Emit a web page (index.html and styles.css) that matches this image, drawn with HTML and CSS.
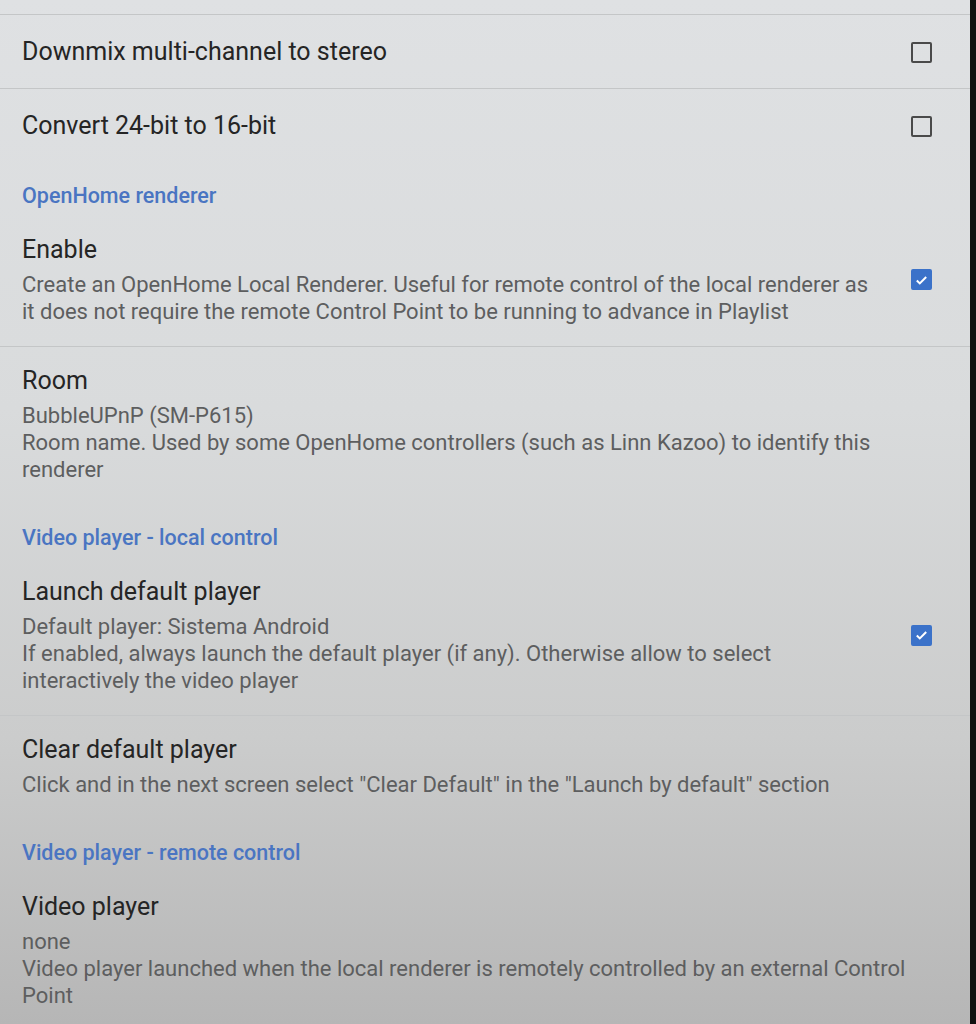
FILE: index.html
```html
<!DOCTYPE html>
<html lang="en">
<head>
  <meta charset="UTF-8">
  <title>Settings</title>
  <link rel="stylesheet" href="styles.css">
</head>
<body>
  <div class="screen">
    <div class="list">

      <div class="pref single divider-top">
        <div class="text">
          <div class="title">Downmix multi-channel to stereo</div>
        </div>
        <div class="widget"><span class="box"></span></div>
      </div>

      <div class="pref single">
        <div class="text">
          <div class="title">Convert 24-bit to 16-bit</div>
        </div>
        <div class="widget"><span class="box"></span></div>
      </div>

      <div class="category">OpenHome renderer</div>

      <div class="pref divider">
        <div class="text">
          <div class="title">Enable</div>
          <div class="summary">Create an OpenHome Local Renderer. Useful for remote control of the local renderer as it does not require the remote Control Point to be running to advance in Playlist</div>
        </div>
        <div class="widget">
          <span class="box checked">
            <svg viewBox="0 0 20 20"><path d="M4.5 10.5l3.5 3.5 7.5-7.5" fill="none" stroke="#fff" stroke-width="2.4"/></svg>
          </span>
        </div>
      </div>

      <div class="pref plain">
        <div class="text">
          <div class="title">Room</div>
          <div class="summary">BubbleUPnP (SM-P615)<br>Room name. Used by some OpenHome controllers (such as Linn Kazoo) to identify this renderer</div>
        </div>
      </div>

      <div class="category">Video player - local control</div>

      <div class="pref divider">
        <div class="text">
          <div class="title">Launch default player</div>
          <div class="summary">Default player: Sistema Android<br>If enabled, always launch the default player (if any). Otherwise allow to select interactively the video player</div>
        </div>
        <div class="widget">
          <span class="box checked">
            <svg viewBox="0 0 20 20"><path d="M4.5 10.5l3.5 3.5 7.5-7.5" fill="none" stroke="#fff" stroke-width="2.4"/></svg>
          </span>
        </div>
      </div>

      <div class="pref plain">
        <div class="text">
          <div class="title">Clear default player</div>
          <div class="summary">Click and in the next screen select "Clear Default" in the "Launch by default" section</div>
        </div>
      </div>

      <div class="category">Video player - remote control</div>

      <div class="pref plain">
        <div class="text">
          <div class="title">Video player</div>
          <div class="summary">none<br>Video player launched when the local renderer is remotely controlled by an external Control Point</div>
        </div>
      </div>

    </div>
    <div class="bezel"></div>
  </div>
</body>
</html>
```

FILE: styles.css
```css
html, body {
  margin: 0;
  height: 100%;
}
body {
  font-family: Roboto, "Noto Sans", Arial, sans-serif;
  background: #1a1a1a;
  overflow: hidden;
}
.screen {
  display: flex;
  height: 1024px;
  background: linear-gradient(180deg, #dfe1e3 0%, #d9dbdc 40%, #cbcccc 72%, #b6b6b6 100%);
}
.list {
  flex: 1;
  padding-top: 14px;
}
.bezel {
  width: 6px;
  background: #111;
}
.pref {
  display: flex;
  align-items: center;
  padding: 18px 0 21px 22px;
}
.pref.single {
  padding-top: 21px;
  padding-bottom: 20px;
}
.pref.plain {
  padding-right: 30px;
}
.divider {
  border-bottom: 1px solid #c4c6c7;
}
.divider-top {
  border-top: 1px solid #c4c6c7;
  border-bottom: 1px solid #c4c6c7;
}
.text {
  flex: 1;
}
.title {
  font-size: 25px;
  line-height: 32px;
  color: #252525;
}
.summary {
  margin-top: 5px;
  font-size: 22px;
  line-height: 27px;
  color: #5d5e5f;
}
.widget {
  width: 21px;
  padding-left: 30px;
  padding-right: 38px;
  display: flex;
  justify-content: flex-end;
}
.box {
  width: 17px;
  height: 17px;
  border: 2px solid #4a4a4a;
  border-radius: 2px;
  display: flex;
  align-items: center;
  justify-content: center;
}
.box.checked {
  background: #3b72c9;
  border-color: #3b72c9;
}
.box svg {
  width: 18px;
  height: 18px;
}
.category {
  padding: 21px 0 7px 22px;
  font-size: 21.5px;
  line-height: 26px;
  font-weight: 500;
  color: #4a75c2;
}
```
